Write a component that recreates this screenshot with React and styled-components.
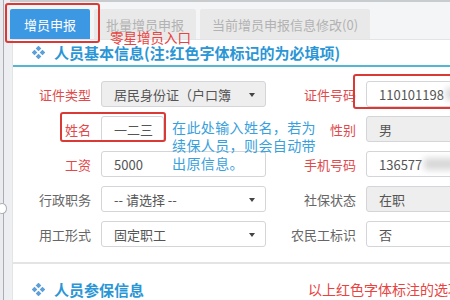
import React from 'react';
import styled, { createGlobalStyle } from 'styled-components';

const GlobalStyle = createGlobalStyle`
  html, body {
    margin: 0;
    padding: 0;
    background: #eef0f3;
    font-family: "Noto Sans CJK SC", "Noto Sans", "Liberation Sans", sans-serif;
  }
`;

const Page = styled.div`
  position: relative;
  width: 450px;
  height: 300px;
  overflow: hidden;
  display: flex;
  background: #eef0f3;
`;

const Rail = styled.div`
  position: relative;
  width: 10px;
  flex-shrink: 0;
  background: linear-gradient(to right, #e9ebee 0, #e9ebee 3px, #a9adb2 3px, #a9adb2 4px, #eceef1 4px);
`;

const RailKnob = styled.div`
  position: absolute;
  left: -3px;
  top: 203px;
  width: 8px;
  height: 9px;
  border: 1px solid #a9adb2;
  border-radius: 50%;
  background: #fff;
`;

const Main = styled.div`
  flex: 1;
  min-width: 0;
  display: flex;
  flex-direction: column;
`;

const TabBar = styled.div`
  height: 42px;
  display: flex;
  align-items: flex-start;
  gap: 4px;
  padding-top: 7px;
  box-sizing: border-box;
  border-top: 2px solid #c9cccf;
  background: #f4f5f6;
`;

const Tab = styled.div`
  height: 30px;
  padding: 0 ${p => (p.$active ? 14 : 12)}px;
  display: flex;
  align-items: center;
  font-size: 13px;
  white-space: nowrap;
  border-radius: 2px 2px 0 0;
  color: ${p => (p.$active ? '#fff' : '#b2b2b2')};
  background: ${p => (p.$active ? '#3d98e4' : '#e9e9e9')};
`;

const Panel = styled.div`
  margin-left: 2px;
  background: #fff;
  border: 1px solid #e2e4e6;
  border-right: none;
`;

const PanelHead = styled.div`
  height: 25px;
  display: flex;
  align-items: center;
  padding-left: 19px;
  gap: 9px;
  border-bottom: 2px solid #55b6d3;
`;

const Title = styled.span`
  font-size: 15px;
  font-weight: bold;
  color: #2b96d5;
  white-space: nowrap;
`;

const FormGrid = styled.div`
  display: grid;
  grid-template-columns: 78px 165px 80px 110px;
  column-gap: 10px;
  row-gap: 9px;
  align-items: center;
  padding: 14px 0 15px;
`;

const Label = styled.div`
  text-align: right;
  font-size: 13px;
  white-space: nowrap;
  color: ${p => (p.$required ? '#e04a4c' : '#666')};
`;

const Field = styled.div`
  position: relative;
  height: 26px;
  box-sizing: border-box;
  display: flex;
  align-items: center;
  padding-left: 12px;
  border: 1px solid #d3d5d8;
  border-radius: 3px;
  font-size: 13px;
  color: #555;
  white-space: nowrap;
  overflow: hidden;
  background: ${p => (p.$grey ? '#eeeeee' : '#fff')};
`;

const Caret = styled.span`
  position: absolute;
  right: 10px;
  top: 11px;
  width: 0;
  height: 0;
  border-left: 3px solid transparent;
  border-right: 3px solid transparent;
  border-top: 4px solid #444;
`;

const Blur = styled.span`
  display: inline-block;
  width: ${p => p.$w}px;
  height: 12px;
  margin-left: 2px;
  background: #d8d8d8;
  filter: blur(3px);
`;

const Gap = styled.div`
  height: 15px;
`;

const Panel2Head = styled.div`
  height: 30px;
  display: flex;
  align-items: center;
  padding-left: 19px;
  padding-top: 10px;
  gap: 9px;
`;

const RedNote = styled.span`
  margin-left: auto;
  margin-right: -12px;
  font-size: 14px;
  color: #e8433f;
  white-space: nowrap;
`;

const RedBox = styled.div`
  position: absolute;
  left: ${p => p.$x}px;
  top: ${p => p.$y}px;
  width: ${p => p.$w}px;
  height: ${p => p.$h}px;
  border: 2px solid #d93a35;
  border-radius: 3px;
  box-sizing: border-box;
  pointer-events: none;
`;

const EntryNote = styled.div`
  position: absolute;
  left: 110px;
  top: 27px;
  font-size: 13.5px;
  color: #e8433f;
  white-space: nowrap;
`;

const HintNote = styled.div`
  position: absolute;
  left: 172px;
  top: 118px;
  font-size: 14px;
  line-height: 18px;
  letter-spacing: 0.4px;
  color: #38a0dc;
`;

const Diamonds = () => (
  <svg width="13" height="13" viewBox="0 0 13 13">
    <g fill="#5d9fd8">
      <rect x="4.5" y="0.5" width="4" height="4" transform="rotate(45 6.5 2.5)" />
      <rect x="4.5" y="8.5" width="4" height="4" transform="rotate(45 6.5 10.5)" />
      <rect x="0.5" y="4.5" width="4" height="4" transform="rotate(45 2.5 6.5)" />
      <rect x="8.5" y="4.5" width="4" height="4" transform="rotate(45 10.5 6.5)" />
    </g>
  </svg>
);

export default function App() {
  return (
    <>
      <GlobalStyle />
      <Page>
        <Rail>
          <RailKnob />
        </Rail>
        <Main>
          <TabBar>
            <Tab $active>增员申报</Tab>
            <Tab>批量增员申报</Tab>
            <Tab>当前增员申报信息修改(0)</Tab>
          </TabBar>
          <Panel>
            <PanelHead>
              <Diamonds />
              <Title>人员基本信息(注:红色字体标记的为必填项)</Title>
            </PanelHead>
            <FormGrid>
              <Label $required>证件类型</Label>
              <Field $grey>居民身份证（户口簿<Caret /></Field>
              <Label $required>证件号码</Label>
              <Field>110101198<Blur $w={14} /></Field>

              <Label $required>姓名</Label>
              <Field style={{ width: 63 }}>一二三</Field>
              <Label $required>性别</Label>
              <Field $grey>男</Field>

              <Label $required>工资</Label>
              <Field>5000</Field>
              <Label $required>手机号码</Label>
              <Field>136577<Blur $w={40} /></Field>

              <Label>行政职务</Label>
              <Field>-- 请选择 --<Caret /></Field>
              <Label>社保状态</Label>
              <Field $grey>在职</Field>

              <Label>用工形式</Label>
              <Field>固定职工<Caret /></Field>
              <Label>农民工标识</Label>
              <Field>否</Field>
            </FormGrid>
          </Panel>
          <Gap />
          <Panel>
            <Panel2Head>
              <Diamonds />
              <Title>人员参保信息</Title>
              <RedNote>以上红色字体标注的选项</RedNote>
            </Panel2Head>
          </Panel>
        </Main>
        <RedBox $x={5} $y={3} $w={95} $h={40} />
        <EntryNote>零星增员入口</EntryNote>
        <RedBox $x={60} $y={112} $w={106} $h={30} />
        <HintNote>
          在此处输入姓名，若为<br />
          续保人员，则会自动带<br />
          出原信息。
        </HintNote>
        <RedBox $x={353} $y={74} $w={100} $h={35} />
      </Page>
    </>
  );
}
